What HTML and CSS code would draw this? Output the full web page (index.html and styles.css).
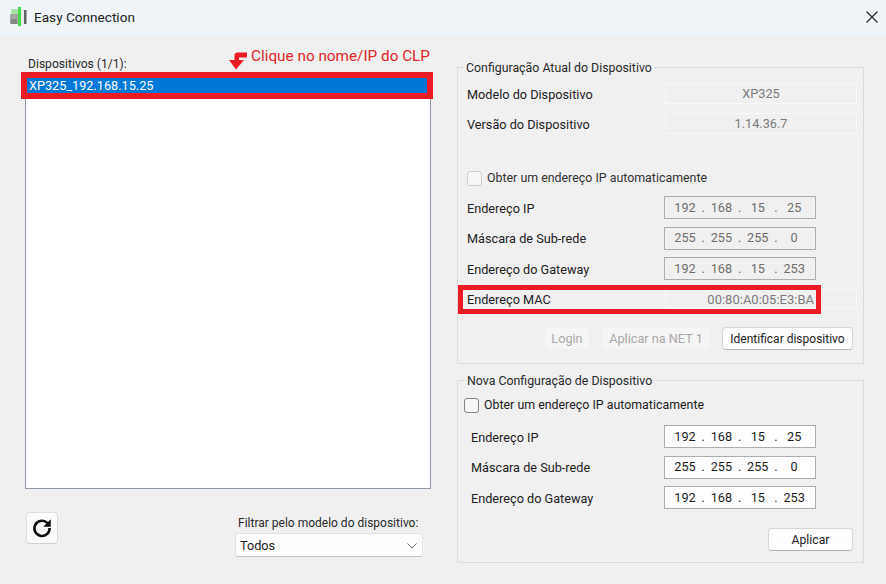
FILE: index.html
```html
<!DOCTYPE html>
<html lang="pt">
<head>
<meta charset="utf-8">
<title>Easy Connection</title>
<link rel="stylesheet" href="styles.css">
</head>
<body>
<div class="window">
  <header class="titlebar">
    <svg class="app-icon" width="18" height="20" viewBox="0 0 18 20">
      <rect x="0" y="7" width="8" height="10" fill="#a3a6a2"/>
      <rect x="1" y="12" width="6" height="5" fill="#858885"/>
      <rect x="1" y="2" width="7" height="5" fill="#a8e0a8"/>
      <rect x="8" y="0" width="3" height="19" fill="#45d94c"/>
      <rect x="11" y="2" width="3" height="15" fill="#e8ece8"/>
      <rect x="14" y="3" width="2.5" height="14" fill="#5f625f"/>
    </svg>
    <span class="title">Easy Connection</span>
    <svg class="close" width="12" height="12" viewBox="0 0 12 12"><path d="M.5.5l11 11M11.5.5l-11 11" stroke="#222" stroke-width="1.1" fill="none"/></svg>
  </header>
  <main class="main">
    <section class="left">
      <div class="list-head">
        <span class="list-label">Dispositivos (1/1):</span>
        <div class="hint">
          <svg class="hint-arrow" width="20" height="18" viewBox="0 0 20 18"><path d="M19 .5H9.5Q6.5.5 6.5 3.5V8H1L8 17.5 16 8H11V5.5H19Z" fill="#ed1c24"/></svg>
          <span class="hint-text">Clique no nome/IP do CLP</span>
        </div>
      </div>
      <div class="listbox">
        <div class="list-item">XP325_192.168.15.25<span class="mark mark-list"></span></div>
      </div>
      <div class="left-foot">
        <button class="btn refresh" type="button" aria-label="Atualizar">
          <svg width="22" height="22" viewBox="0 0 22 22"><path d="M16.6 6.2A7.6 7.6 0 1 0 18.6 11" fill="none" stroke="#111" stroke-width="2.6"/><path d="M19.8 2.2v7.6h-7.6z" fill="#111"/></svg>
        </button>
        <div class="filter">
          <label class="filter-label">Filtrar pelo modelo do dispositivo:</label>
          <div class="select">
            <span>Todos</span>
            <svg width="10" height="6" viewBox="0 0 10 6"><path d="M.5.5l4.5 4.5 4.5-4.5" fill="none" stroke="#666" stroke-width="1"/></svg>
          </div>
        </div>
      </div>
    </section>
    <section class="right">
      <div class="group group-current">
        <span class="legend">Configuração Atual do Dispositivo</span>
        <div class="row row-info"><span class="row-label">Modelo do Dispositivo</span><span class="info">XP325</span></div>
        <div class="row row-info"><span class="row-label">Versão do Dispositivo</span><span class="info">1.14.36.7</span></div>
        <label class="check check-off"><input type="checkbox" disabled>Obter um endereço IP automaticamente</label>
        <div class="row row-ip"><span class="row-label">Endereço IP</span>
          <span class="ip ip-off"><b>192</b><i>.</i><b>168</b><i>.</i><b>15</b><i>.</i><b>25</b></span></div>
        <div class="row row-ip"><span class="row-label">Máscara de Sub-rede</span>
          <span class="ip ip-off"><b>255</b><i>.</i><b>255</b><i>.</i><b>255</b><i>.</i><b>0</b></span></div>
        <div class="row row-ip"><span class="row-label">Endereço do Gateway</span>
          <span class="ip ip-off"><b>192</b><i>.</i><b>168</b><i>.</i><b>15</b><i>.</i><b>253</b></span></div>
        <div class="row row-mac"><span class="row-label">Endereço MAC</span><span class="info info-mac">00:80:A0:05:E3:BA</span><span class="mark mark-mac"></span></div>
        <div class="actions">
          <button class="btn btn-login" type="button" disabled>Login</button>
          <button class="btn btn-net" type="button" disabled>Aplicar na NET 1</button>
          <button class="btn btn-identify" type="button">Identificar dispositivo</button>
        </div>
      </div>
      <div class="group group-new">
        <span class="legend">Nova Configuração de Dispositivo</span>
        <label class="check check-on"><input type="checkbox">Obter um endereço IP automaticamente</label>
        <div class="row row-new"><span class="row-label">Endereço IP</span>
          <span class="ip"><b>192</b><i>.</i><b>168</b><i>.</i><b>15</b><i>.</i><b>25</b></span></div>
        <div class="row row-new"><span class="row-label">Máscara de Sub-rede</span>
          <span class="ip"><b>255</b><i>.</i><b>255</b><i>.</i><b>255</b><i>.</i><b>0</b></span></div>
        <div class="row row-new"><span class="row-label">Endereço do Gateway</span>
          <span class="ip"><b>192</b><i>.</i><b>168</b><i>.</i><b>15</b><i>.</i><b>253</b></span></div>
        <div class="apply-row"><button class="btn btn-apply" type="button">Aplicar</button></div>
      </div>
    </section>
  </main>
</div>
</body>
</html>
```
FILE: styles.css
```css
* { box-sizing: border-box; }
html, body { margin: 0; padding: 0; }
body {
  width: 886px;
  height: 584px;
  overflow: hidden;
  background: #f0f0f0;
  color: #1c1c1c;
  font-family: Roboto, "Open Sans", sans-serif;
  font-size: 12.7px;
  line-height: 16px;
}
.window { width: 886px; height: 584px; display: flex; flex-direction: column; }

.titlebar {
  height: 36px;
  flex: none;
  display: flex;
  align-items: center;
  background: #eff4f9;
  padding: 0 8px 2px 10px;
}
.app-icon { flex: none; }
.title { margin-left: 6px; font-size: 13.6px; color: #222; }
.close { margin-left: auto; }

.main { flex: 1; display: flex; gap: 26px; padding: 0 22px 0 25px; }
.left { width: 406px; flex: none; }
.right { width: 407px; flex: none; padding-top: 31px; }

.list-head { height: 38px; position: relative; display: flex; align-items: flex-end; padding: 0 0 2px 3px; }
.list-label { color: #2a2a2a; font-size: 12.1px; }
.hint { position: absolute; left: 203px; top: 11px; display: flex; align-items: flex-start; gap: 3px; }
.hint-arrow { flex: none; margin-top: 5px; }
.hint-text { color: #e5262c; font-size: 15.3px; line-height: 18px; }

.listbox { height: 415px; background: #fff; border: 1px solid #8d99a6; padding: 3px 3px 0 1px; }
.list-item { position: relative; height: 15px; line-height: 15px; background: #0078d7; color: #fff; padding-left: 2px; }
.mark { position: absolute; border: 6px solid #ed1c24; pointer-events: none; }
.mark-list { left: -6px; right: -6px; top: -6px; bottom: -6px; }
.mark-mac { left: -9px; top: -4px; width: 363px; height: 29px; border-width: 5.5px; }

.left-foot { display: flex; justify-content: space-between; padding: 23px 8px 0 1px; }
.btn {
  font: inherit;
  height: 23px;
  padding: 0;
  color: #1c1c1c;
  background: #fdfdfd;
  border: 1px solid #d6d6d6;
  border-bottom-color: #b4b4b4;
  border-radius: 4px;
}
.btn:disabled { background: #f5f5f5; border-color: #f0f0f0; color: #a8a8a8; }
.refresh { width: 32px; height: 32px; display: flex; align-items: center; justify-content: center; background: #fbfbfb; border-color: #dedede; border-bottom-color: #d0d0d0; }
.filter { width: 188px; margin-top: 2px; }
.filter-label { display: block; padding: 1px 0 0 3px; height: 19px; white-space: nowrap; color: #2a2a2a; font-size: 12px; }
.select {
  height: 24px;
  display: flex;
  align-items: center;
  justify-content: space-between;
  padding: 1px 5px 0 4px;
  background: #fdfdfd;
  border: 1px solid #e3e3e3;
  border-bottom-color: #c4c4c4;
  border-radius: 3px;
}

.group { position: relative; border: 1px solid #dcdcdc; }
.legend { position: absolute; left: 6px; top: -8px; padding: 0 2px; background: #f0f0f0; white-space: nowrap; color: #2a2a2a; font-size: 12.35px; }
.group-new .legend { left: 7px; }
.group-current { height: 297px; padding: 15px 6px 0 9px; }
.group-new { height: 183px; margin-top: 16px; padding: 16px 10px 0 6px; }

.row { display: flex; align-items: center; position: relative; }
.row-label { flex: none; color: #222; padding-top: 2px; }
.row-info { height: 21px; margin-bottom: 9px; }
.row-info .row-label { width: 198px; }
.info {
  width: 192px;
  height: 21px;
  line-height: 19px;
  text-align: center;
  color: #7b7b7b;
  border: 1px solid #f8f8f8;
}
.row-ip { height: 23px; margin-bottom: 7.5px; }
.row-ip .row-label { width: 197px; }
.row-new { height: 23px; margin: 0 0 7.5px 7px; }
.row-new .row-label { width: 193px; }
.row-mac { height: 20px; margin-top: 9px; }
.row-mac .row-label { width: 198px; }
.info-mac { height: 20px; text-align: right; padding-right: 42px; font-size: 13px; }

.ip {
  width: 152px;
  height: 23px;
  display: flex;
  align-items: center;
  padding-left: 7px;
  background: #fff;
  border: 1px solid #adadad;
  color: #1c1c1c;
}
.ip-off { background: #f0f0f0; color: #6e6e6e; }
.ip b { width: 26px; flex: none; font-weight: 400; text-align: center; }
.ip i { width: 10.4px; flex: none; font-style: normal; text-align: center; }

.check { display: flex; align-items: center; gap: 5px; height: 16px; font-size: 12.4px; }
.check input { appearance: none; margin: 0; width: 15px; height: 15px; border-radius: 3px; flex: none; background: #f6f6f6; }
.check-off { margin: 36px 0 10px; color: #333; }
.check-off input { border: 1px solid #cfcfcf; }
.check-on { margin-bottom: 12px; }
.check-on input { border: 1px solid #858585; }

.actions { display: flex; margin-top: 18px; padding-left: 77px; }
.btn-login { width: 46px; }
.btn-net { width: 110px; margin-left: 11px; }
.btn-identify { width: 131px; margin-left: 11px; font-size: 12px; }
.apply-row { display: flex; justify-content: flex-end; margin-top: 19px; }
.btn-apply { width: 85px; font-size: 12.2px; }
```
